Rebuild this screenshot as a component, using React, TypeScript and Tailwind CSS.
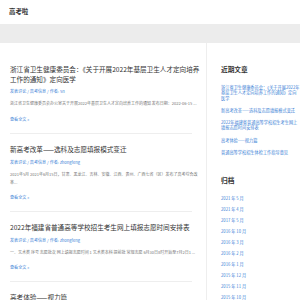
const posts = [
  {
    title: '浙江省卫生健康委员会：《关于开展2022年基层卫生人才定向培养工作的通知》定向医学',
    author: '5n',
    excerpt: '浙江省卫生健康委员会办公室关于开展2022年基层卫生人才定向培养工作的通知 发布日期：2022-06-15 ...',
  },
  {
    title: '新高考改革——选科及志愿填报模式变迁',
    author: 'zhongfeng',
    excerpt: '2021年5月 2021年6月15日，甘肃、黑龙江、吉林、安徽、江西、贵州、广西七省（区）发布了高考综合改革...',
  },
  {
    title: '2022年福建省普通高等学校招生考生网上填报志愿时间安排表',
    author: 'zhongfeng',
    excerpt: '一、艺术类 序号 志愿批次 网上填报志愿时间 1 艺术类本科 提前批 常规志愿 6月30日8时开始至7月2日1 ...',
  },
  {
    title: '高考体验——视力篇',
    author: 'zhongfeng',
    excerpt: '',
  },
];

const recent = [
  '浙江省卫生健康委员会：《关于开展2022年基层卫生人才定向培养工作的通知》定向医学',
  '新高考改革——选科及志愿填报模式变迁',
  '2022年福建省普通高等学校招生考生网上填报志愿时间安排表',
  '高考体验——视力篇',
  '普通高等学校招生体检工作指导意见',
];

const archives = [
  '2021 年 5 月',
  '2021 年 4 月',
  '2017 年 5 月',
  '2016 年 10 月',
  '2016 年 3 月',
  '2016 年 2 月',
  '2016 年 1 月',
  '2015 年 12 月',
  '2015 年 11 月',
  '2015 年 10 月',
];

export default function App() {
  return (
    <div className="w-[300px] h-[300px] overflow-hidden bg-white font-['Noto_Sans_CJK_SC','Noto_Sans',sans-serif]">
      <header className="h-[24px] flex items-center pl-[9px]">
        <span className="text-[6.4px] font-bold text-[#333]">高考啦</span>
      </header>
      <div className="h-[19px] bg-[#ececec]" />

      <div className="flex">
        <main className="w-[206px] shrink-0 pl-[10px] pr-[6px] pt-[22px]">
          {posts.map((post, idx) => (
            <article key={idx} className={idx === 0 ? '' : 'mt-[11px]'}>
              <h2 className="text-[6.6px] leading-[9.7px] font-normal text-[#333]">{post.title}</h2>
              <div className="mt-[4px] text-[4.1px] leading-[6px] text-[#3c82d6]">
                发表评论 / 高考信息 / 作者: {post.author}
              </div>
              {post.excerpt && (
                <p className="mt-[5px] text-[4px] leading-[8.4px] text-[#777]">{post.excerpt}</p>
              )}
              <div className="mt-[8px] text-[4.1px] leading-[6px] text-[#3c82d6]">查看全文 »</div>
              <div className="mt-[11px] w-[182px] border-b border-[#eee]" />
            </article>
          ))}
        </main>

        <aside className="flex-1 min-h-[257px] border-l border-[#eee] pl-[14px] pt-[22px]">
          <h3 className="text-[6.7px] leading-[9px] font-bold text-[#333]">近期文章</h3>
          <ul className="mt-[11px] flex flex-col gap-[7px]">
            {recent.map((item) => (
              <li key={item} className="text-[4.2px] leading-[5.3px] text-[#3c82d6]">
                {item}
              </li>
            ))}
          </ul>

          <h3 className="mt-[21px] text-[6.7px] leading-[9px] font-bold text-[#333]">归档</h3>
          <ul className="mt-[10px] flex flex-col gap-[5px]">
            {archives.map((item) => (
              <li key={item} className="text-[4.2px] leading-[6px] text-[#3c82d6]">
                {item}
              </li>
            ))}
          </ul>
        </aside>
      </div>
    </div>
  );
}
